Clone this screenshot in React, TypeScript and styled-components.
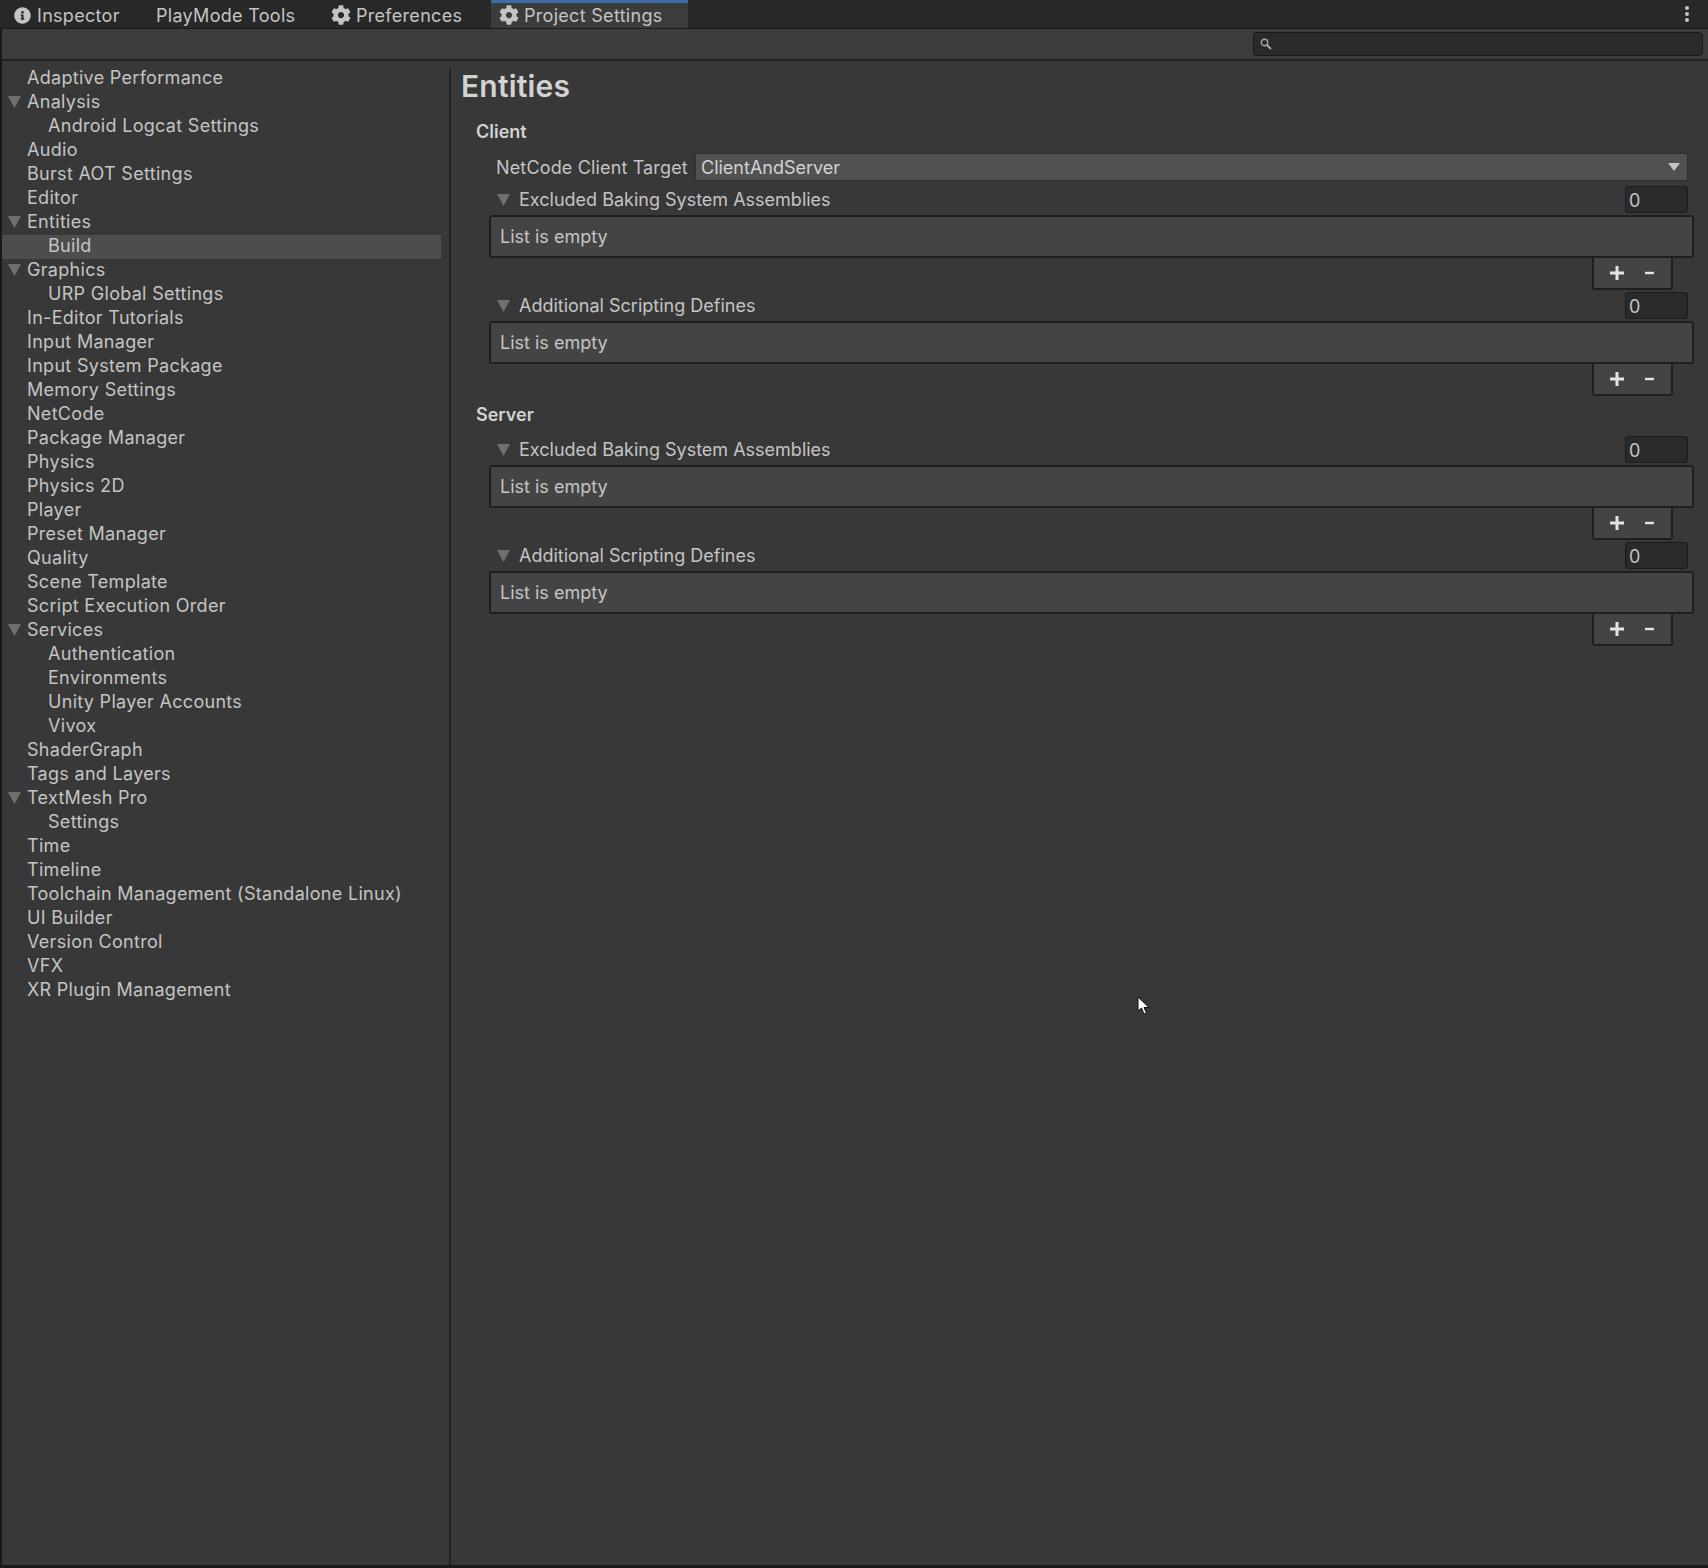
import React from "react";
import styled, { createGlobalStyle } from "styled-components";
import { FaCog, FaInfoCircle } from "react-icons/fa";

const GlobalStyle = createGlobalStyle`
  html, body {
    margin: 0;
    padding: 0;
    background: #191919;
  }
  * {
    box-sizing: border-box;
  }
`;

const Window = styled.div`
  position: relative;
  display: flex;
  flex-direction: column;
  width: 1708px;
  height: 1568px;
  overflow: hidden;
  background: #191919;
  font-family: Inter, "Noto Sans", sans-serif;
  font-size: 18px;
  letter-spacing: 0.3px;
  color: #c4c4c4;
`;

const TabBar = styled.div`
  display: flex;
  flex: none;
  height: 29px;
  padding-left: 2px;
  background: #282828;
  border-bottom: 1px solid #1c1c1c;
`;

const Tab = styled.div<{ $width: number; $active?: boolean; $pad: number }>`
  display: flex;
  align-items: center;
  width: ${(p) => p.$width}px;
  height: 28px;
  padding-left: ${(p) => p.$pad}px;
  padding-bottom: 1px;
  background: ${(p) => (p.$active ? "#3c3c3c" : "transparent")};
  border-top: 3px solid ${(p) => (p.$active ? "#3a6ea5" : "transparent")};
  white-space: nowrap;
`;

const TabIcon = styled.span<{ $gear?: boolean }>`
  display: flex;
  flex: none;
  margin-right: ${(p) => (p.$gear ? 5 : 6)}px;
  color: #c4c4c4;
  font-size: ${(p) => (p.$gear ? 20 : 17)}px;
`;

const Kebab = styled.div`
  display: flex;
  flex-direction: column;
  gap: 2px;
  margin: 6px 19px 0 auto;
`;

const KebabDot = styled.span`
  width: 4px;
  height: 4px;
  border-radius: 50%;
  background: #c4c4c4;
`;

const Toolbar = styled.div`
  display: flex;
  flex: none;
  justify-content: flex-end;
  align-items: center;
  height: 32px;
  margin-left: 2px;
  padding-right: 5px;
  background: #3c3c3c;
  border-bottom: 2px solid #232323;
`;

const SearchField = styled.div`
  display: flex;
  align-items: center;
  width: 450px;
  height: 24px;
  padding-left: 6px;
  background: #2a2a2a;
  border: 1px solid #191919;
  border-radius: 4px;
`;

const SearchIcon = styled.svg`
  width: 12px;
  height: 12px;
  fill: none;
  stroke: #a8a8a8;
`;

const Body = styled.div`
  display: flex;
  flex: 1;
  min-height: 0;
  margin: 0 0 3px 2px;
  background: #383838;
`;

const Sidebar = styled.nav`
  flex: none;
  width: 447px;
  padding: 6px 8px 0 0;
`;

const Divider = styled.div`
  flex: none;
  width: 2px;
  margin-top: 7px;
  background: #232323;
`;

const TreeRow = styled.div<{ $child?: boolean; $selected?: boolean }>`
  position: relative;
  display: flex;
  align-items: center;
  height: 24px;
  padding-left: ${(p) => (p.$child ? 46 : 25)}px;
  padding-bottom: 4px;
  background: ${(p) => (p.$selected ? "#4d4d4d" : "transparent")};
  white-space: nowrap;
`;

const TreeArrow = styled.svg`
  position: absolute;
  left: 6px;
  top: 5px;
  width: 13px;
  height: 12px;
  fill: #6f6f6f;
`;

const Content = styled.main`
  flex: 1;
  min-width: 0;
  padding: 0 13px 0 10px;
  letter-spacing: 0;
`;

const PageTitle = styled.h1`
  margin: 6px 0 0;
  height: 38px;
  line-height: 38px;
  font-size: 30px;
  font-weight: 600;
  letter-spacing: 0.2px;
  color: #d2d2d2;
`;

const SectionTitle = styled.h2<{ $top: number }>`
  height: 22px;
  margin: ${(p) => p.$top}px 0 10px 15px;
  line-height: 22px;
  font-size: 18px;
  font-weight: 600;
  letter-spacing: 0;
  color: #d2d2d2;
`;

const FieldRow = styled.div`
  display: flex;
  align-items: center;
  height: 28px;
  margin: 1px 7px 5px 35px;
`;

const FieldLabel = styled.span`
  flex: none;
  width: 199px;
  letter-spacing: 0.15px;
`;

const Dropdown = styled.div`
  display: flex;
  flex: 1;
  align-items: center;
  justify-content: space-between;
  height: 28px;
  padding: 0 7px 0 5px;
  background: #515151;
  border: 1px solid #303030;
  border-radius: 3px;
  color: #d2d2d2;
`;

const DropdownArrow = styled.svg`
  width: 12px;
  height: 8px;
  fill: #c4c4c4;
`;

const ListBlock = styled.section`
  margin-bottom: 2px;
`;

const ListHeader = styled.div`
  display: flex;
  align-items: center;
  height: 27px;
  margin: 0 7px 2px 36px;
`;

const HeaderArrow = styled.svg`
  flex: none;
  width: 13px;
  height: 12px;
  margin-right: 9px;
  fill: #6f6f6f;
`;

const CountField = styled.div`
  display: flex;
  align-items: center;
  width: 63px;
  height: 27px;
  margin-left: auto;
  padding: 2px 0 0 3px;
  background: #2a2a2a;
  border: 1px solid #1c1c1c;
  border-radius: 3px;
`;

const ListBox = styled.div`
  display: flex;
  align-items: center;
  height: 43px;
  margin: 0 1px 0 28px;
  padding-left: 9px;
  background: #444444;
  border: 2px solid #1f1f1f;
  border-radius: 3px;
`;

const ListFooter = styled.div`
  display: flex;
  align-items: center;
  gap: 19px;
  width: 81px;
  height: 32px;
  margin-left: auto;
  margin-right: 22px;
  padding-left: 16px;
  background: #444444;
  border: 2px solid #1f1f1f;
  border-top: none;
  border-radius: 0 0 3px 3px;
`;

const FooterIcon = styled.svg`
  flex: none;
  width: 14px;
  height: 14px;
  fill: #e4e4e4;
`;

const Cursor = styled.svg`
  position: absolute;
  left: 1137px;
  top: 996px;
  width: 13px;
  height: 19px;
`;

const tree: { label: string; child?: boolean; open?: boolean; selected?: boolean }[] = [
  { label: "Adaptive Performance" },
  { label: "Analysis", open: true },
  { label: "Android Logcat Settings", child: true },
  { label: "Audio" },
  { label: "Burst AOT Settings" },
  { label: "Editor" },
  { label: "Entities", open: true },
  { label: "Build", child: true, selected: true },
  { label: "Graphics", open: true },
  { label: "URP Global Settings", child: true },
  { label: "In-Editor Tutorials" },
  { label: "Input Manager" },
  { label: "Input System Package" },
  { label: "Memory Settings" },
  { label: "NetCode" },
  { label: "Package Manager" },
  { label: "Physics" },
  { label: "Physics 2D" },
  { label: "Player" },
  { label: "Preset Manager" },
  { label: "Quality" },
  { label: "Scene Template" },
  { label: "Script Execution Order" },
  { label: "Services", open: true },
  { label: "Authentication", child: true },
  { label: "Environments", child: true },
  { label: "Unity Player Accounts", child: true },
  { label: "Vivox", child: true },
  { label: "ShaderGraph" },
  { label: "Tags and Layers" },
  { label: "TextMesh Pro", open: true },
  { label: "Settings", child: true },
  { label: "Time" },
  { label: "Timeline" },
  { label: "Toolchain Management (Standalone Linux)" },
  { label: "UI Builder" },
  { label: "Version Control" },
  { label: "VFX" },
  { label: "XR Plugin Management" },
];

const EmptyList = ({ title }: { title: string }) => (
  <ListBlock>
    <ListHeader>
      <HeaderArrow viewBox="0 0 13 12">
        <path d="M0 0h13L6.500 12z" />
      </HeaderArrow>
      {title}
      <CountField>0</CountField>
    </ListHeader>
    <ListBox>List is empty</ListBox>
    <ListFooter>
      <FooterIcon viewBox="0 0 14 14">
        <path d="M5.500 0h3v5.500H14v3H8.500V14h-3V8.500H0v-3h5.500z" />
      </FooterIcon>
      <FooterIcon viewBox="0 0 14 14">
        <path d="M2 5.800h9v2.400H2z" />
      </FooterIcon>
    </ListFooter>
  </ListBlock>
);

export default function App() {
  return (
    <Window>
      <GlobalStyle />
      <TabBar>
        <Tab $width={150} $pad={12}>
          <TabIcon>
            <FaInfoCircle />
          </TabIcon>
          Inspector
        </Tab>
        <Tab $width={179} $pad={4}>
          PlayMode Tools
        </Tab>
        <Tab $width={160} $pad={0}>
          <TabIcon $gear>
            <FaCog />
          </TabIcon>
          Preferences
        </Tab>
        <Tab $width={197} $pad={8} $active>
          <TabIcon $gear>
            <FaCog />
          </TabIcon>
          Project Settings
        </Tab>
        <Kebab>
          <KebabDot />
          <KebabDot />
          <KebabDot />
        </Kebab>
      </TabBar>
      <Toolbar>
        <SearchField>
          <SearchIcon viewBox="0 0 12 12">
            <circle cx="4.500" cy="4.500" r="3.200" strokeWidth="1.400" />
            <path d="M7 7l4 4" strokeWidth="2" />
          </SearchIcon>
        </SearchField>
      </Toolbar>
      <Body>
        <Sidebar>
          {tree.map((item) => (
            <TreeRow key={item.label} $child={item.child} $selected={item.selected}>
              {item.open && (
                <TreeArrow viewBox="0 0 13 12">
                  <path d="M0 0h13L6.500 12z" />
                </TreeArrow>
              )}
              {item.label}
            </TreeRow>
          ))}
        </Sidebar>
        <Divider />
        <Content>
          <PageTitle>Entities</PageTitle>
          <SectionTitle $top={16}>Client</SectionTitle>
          <FieldRow>
            <FieldLabel>NetCode Client Target</FieldLabel>
            <Dropdown>
              ClientAndServer
              <DropdownArrow viewBox="0 0 12 8">
                <path d="M0 0h12L6 8z" />
              </DropdownArrow>
            </Dropdown>
          </FieldRow>
          <EmptyList title="Excluded Baking System Assemblies" />
          <EmptyList title="Additional Scripting Defines" />
          <SectionTitle $top={8}>Server</SectionTitle>
          <EmptyList title="Excluded Baking System Assemblies" />
          <EmptyList title="Additional Scripting Defines" />
        </Content>
      </Body>
      <Cursor viewBox="0 0 13 19">
        <path
          d="M1 1v14l3.500-3 2.500 6 2.500-1-2.500-5.500H12z"
          fill="#ffffff"
          stroke="#111111"
          strokeWidth="1"
        />
      </Cursor>
    </Window>
  );
}
